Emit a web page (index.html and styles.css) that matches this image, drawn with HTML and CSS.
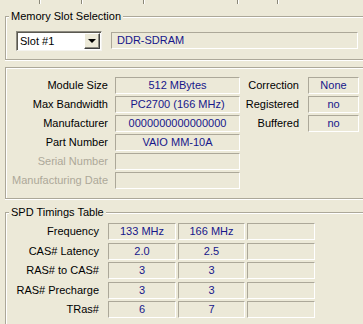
FILE: index.html
```html
<!DOCTYPE html>
<html lang="en">
<head>
  <meta charset="UTF-8">
  <title>SPD</title>
  <link rel="stylesheet" href="styles.css">
</head>
<body>
  <div class="tabs">
    <div class="tab tab-1"></div>
    <div class="tab tab-2"></div>
    <div class="tab tab-3"></div>
    <div class="tab tab-4"></div>
    <div class="tab tab-5"></div>
    <div class="tab tab-6"></div>
  </div>

  <div class="group group-slot">
    <span class="group-title">Memory Slot Selection</span>
    <div class="combo">
      <span class="combo-text">Slot #1</span>
      <span class="combo-btn"><span class="arrow"></span></span>
    </div>
    <div class="field field-type">DDR-SDRAM</div>
  </div>

  <div class="group group-module">
    <div class="module-grid">
      <div class="label">Module Size</div>
      <div class="field">512 MBytes</div>
      <div class="label">Max Bandwidth</div>
      <div class="field">PC2700 (166 MHz)</div>
      <div class="label">Manufacturer</div>
      <div class="field">0000000000000000</div>
      <div class="label">Part Number</div>
      <div class="field">VAIO MM-10A</div>
      <div class="label disabled">Serial Number</div>
      <div class="field"></div>
      <div class="label disabled">Manufacturing Date</div>
      <div class="field"></div>
    </div>
    <div class="flags-grid">
      <div class="label">Correction</div>
      <div class="field">None</div>
      <div class="label">Registered</div>
      <div class="field">no</div>
      <div class="label">Buffered</div>
      <div class="field">no</div>
    </div>
  </div>

  <div class="group group-spd">
    <span class="group-title">SPD Timings Table</span>
    <div class="spd-grid">
      <div class="label">Frequency</div>
      <div class="field">133 MHz</div>
      <div class="field">166 MHz</div>
      <div class="field"></div>
      <div class="label">CAS# Latency</div>
      <div class="field">2.0</div>
      <div class="field">2.5</div>
      <div class="field"></div>
      <div class="label">RAS# to CAS#</div>
      <div class="field">3</div>
      <div class="field">3</div>
      <div class="field"></div>
      <div class="label">RAS# Precharge</div>
      <div class="field">3</div>
      <div class="field">3</div>
      <div class="field"></div>
      <div class="label">TRas#</div>
      <div class="field">6</div>
      <div class="field">7</div>
      <div class="field"></div>
    </div>
  </div>
</body>
</html>
```

FILE: styles.css
```css
:root {
  --face: #ece9d8;
  --etch: #aca899;
  --value: #16168a;
  --disabled: #aca899;
}

* {
  margin: 0;
  padding: 0;
  box-sizing: border-box;
}

html {
  overflow: hidden;
}

body {
  width: 363px;
  height: 324px;
  overflow: hidden;
  background-color: var(--face);
  color: #000;
  font-family: "Liberation Sans", Arial, sans-serif;
  font-size: 11px;
}

/* bottom of the tab strip, cut off by the crop */
.tabs {
  display: flex;
  height: 4px;
}

.tab {
  border-right: 1px solid #8a8778;
}

.tab-1 { width: 40px; }
.tab-2 { width: 42px; border-left: 1px solid #fff; }
.tab-3 { width: 62px; border-left: 1px solid #fff; }
.tab-4 { width: 94px; border-left: 1px solid #fff; }
.tab-5 { width: 40px; border-left: 1px solid #fff; }
.tab-6 { flex: 1; border-right: none; border-left: 1px solid #fff; }

/* etched group boxes, right edge is outside the crop */
.group {
  position: relative;
  margin-left: 5px;
  border: 1px solid var(--etch);
  border-right: none;
  box-shadow: inset 1px 1px 0 #fff, 0 1px 0 #fff;
}

.group-title {
  position: absolute;
  top: -7px;
  left: 3px;
  padding: 0 2px;
  line-height: 13px;
  background-color: var(--face);
}

.group-slot {
  margin-top: 12px;
  height: 44px;
  padding: 14px 0 0 10px;
  display: flex;
  align-items: flex-start;
}

.combo {
  width: 86px;
  height: 20px;
  display: flex;
  align-items: center;
  background-color: #fff;
  border: 1px solid;
  border-color: #8c8a80 #f4f3ee #f4f3ee #8c8a80;
  box-shadow: inset 1px 1px 0 #5a5850;
}

.combo-text {
  flex: 1;
  padding-left: 3px;
  line-height: 16px;
}

.combo-btn {
  width: 16px;
  height: 16px;
  margin-right: 1px;
  display: flex;
  align-items: center;
  justify-content: center;
  background-color: var(--face);
  border: 1px solid;
  border-color: #fff #404040 #404040 #fff;
  box-shadow: inset -1px -1px 0 #8c8a80;
}

.arrow {
  width: 0;
  height: 0;
  border-left: 4px solid transparent;
  border-right: 4px solid transparent;
  border-top: 4px solid #000;
}

.field {
  height: 17px;
  line-height: 15px;
  text-align: center;
  color: var(--value);
  white-space: nowrap;
  overflow: hidden;
  border: 1px solid;
  border-color: var(--etch) #fff #fff var(--etch);
}

.field-type {
  width: 247px;
  margin: 1px 0 0 9px;
  padding-left: 5px;
  text-align: left;
}

.label {
  line-height: 17px;
  text-align: right;
  white-space: nowrap;
}

.label.disabled {
  color: var(--disabled);
}

.group-module {
  margin-top: 7px;
  height: 132px;
  padding-top: 9px;
  display: flex;
  align-items: flex-start;
}

.module-grid {
  display: grid;
  grid-template-columns: 102px 125px;
  grid-auto-rows: 17px;
  column-gap: 7px;
  row-gap: 2px;
}

.flags-grid {
  display: grid;
  grid-template-columns: 59px 51px;
  grid-auto-rows: 17px;
  column-gap: 9px;
  row-gap: 2px;
}

.group-spd {
  margin-top: 13px;
  height: 112px;
  padding-top: 10px;
  border-bottom: none;
  box-shadow: inset 1px 1px 0 #fff;
}

.spd-grid {
  display: grid;
  grid-template-columns: 100px 68px 67px 68px;
  grid-auto-rows: 17px;
  column-gap: 2px;
  row-gap: 2.5px;
}

.spd-grid .label {
  padding-right: 7px;
}
```
